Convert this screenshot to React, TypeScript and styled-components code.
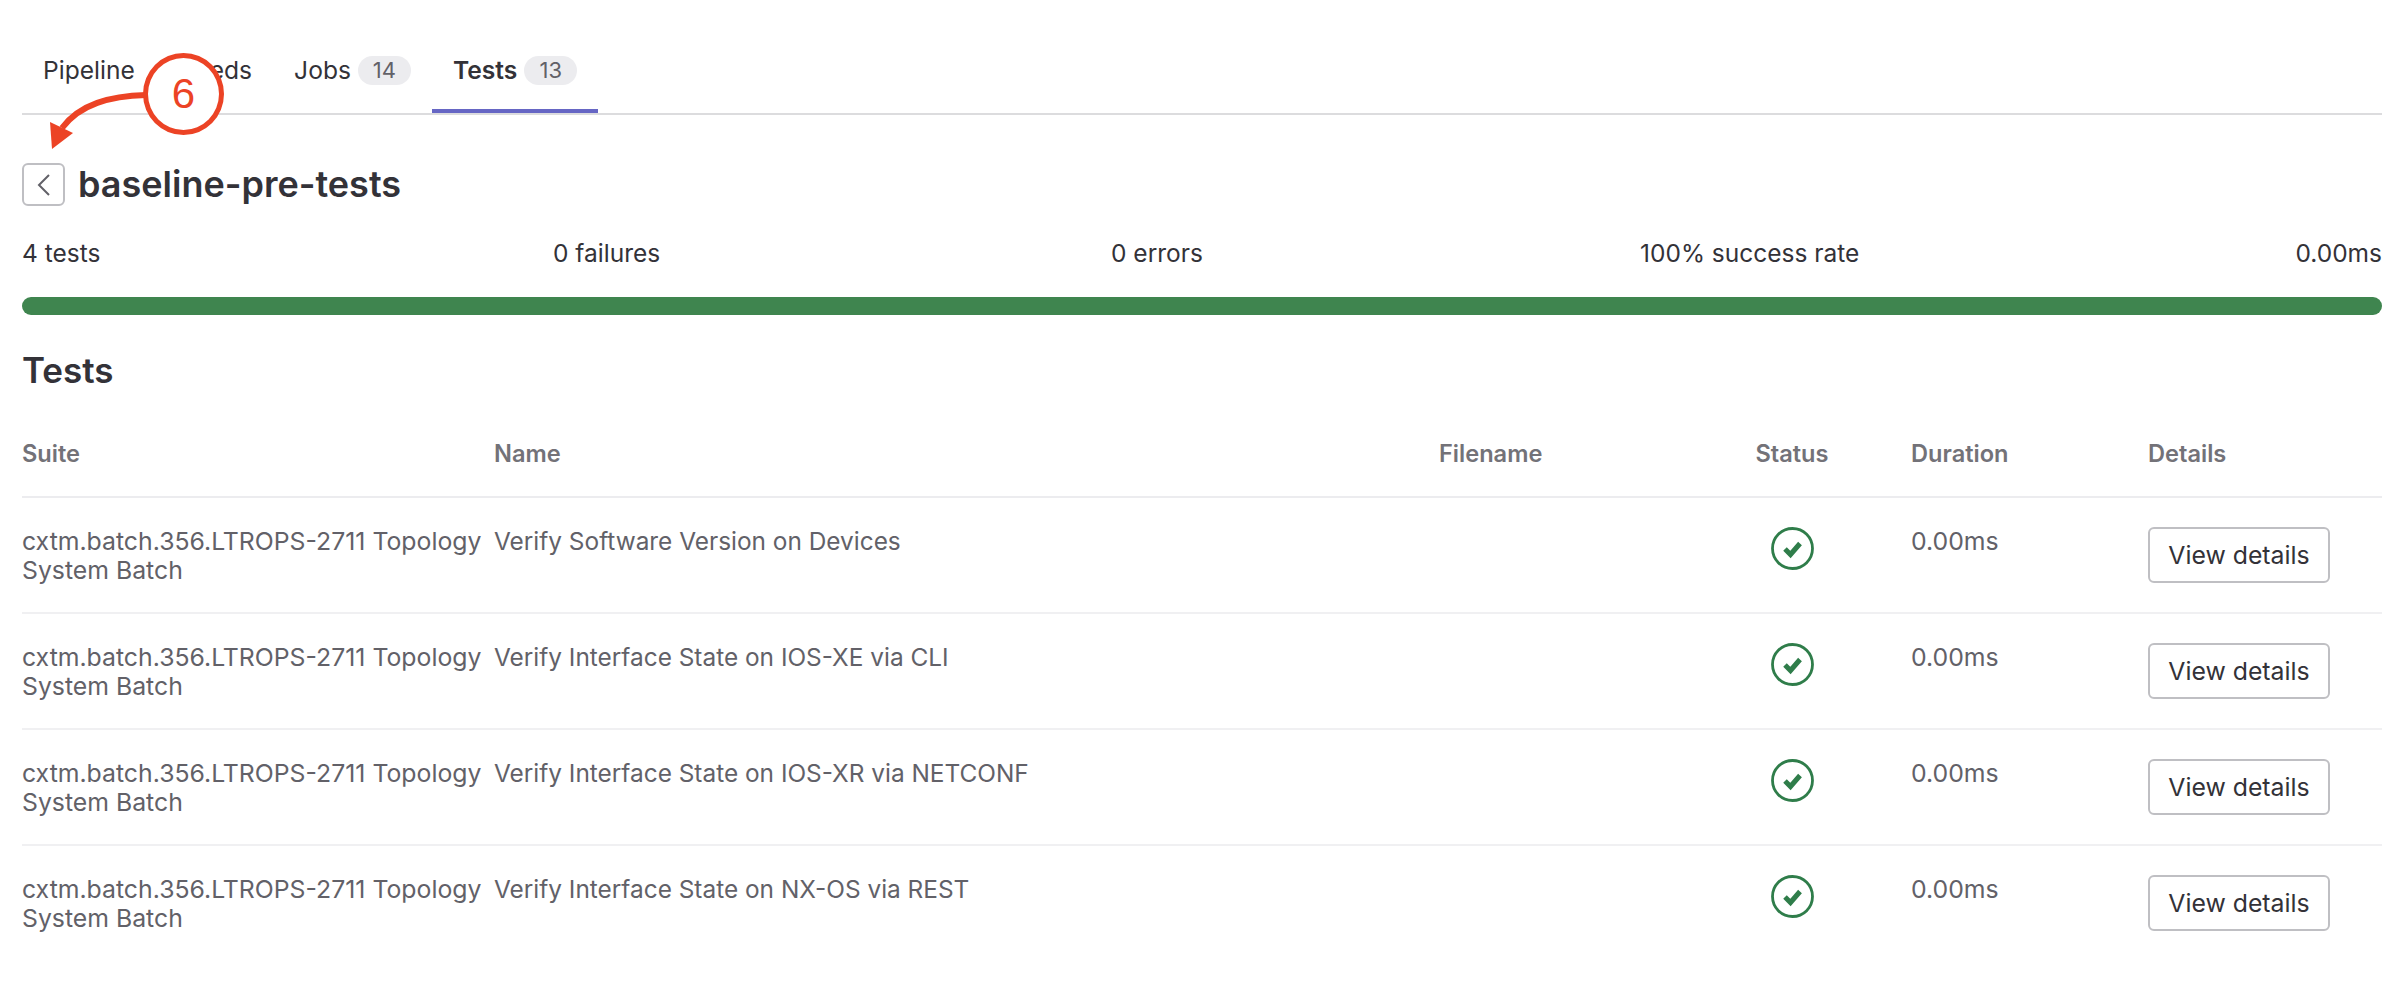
import React from "react";
import styled, { createGlobalStyle } from "styled-components";

const GlobalStyle = createGlobalStyle`
  html, body {
    margin: 0;
    background: #fff;
    font-family: Inter, "Noto Sans", "Liberation Sans", sans-serif;
    color: #333238;
  }
`;

const Page = styled.div`
  position: relative;
  width: 2396px;
  height: 990px;
  box-sizing: border-box;
  padding: 0 14px 0 22px;
  overflow: hidden;
`;

const Tabs = styled.div`
  display: flex;
  height: 87px;
  padding-top: 26px;
  border-bottom: 2px solid #dcdcde;
`;

const Tab = styled.div<{ $active?: boolean }>`
  display: flex;
  align-items: flex-start;
  gap: 7px;
  height: 87px;
  padding: 30px 21px 0;
  box-sizing: border-box;
  font-size: 24.6px;
  line-height: 29px;
  font-weight: ${(p) => (p.$active ? 600 : 400)};
  border-bottom: ${(p) => (p.$active ? "4px solid #6666c4" : "none")};
`;

const Badge = styled.span`
  display: inline-flex;
  align-items: center;
  justify-content: center;
  width: 53px;
  height: 29px;
  border-radius: 15px;
  background: #ececef;
  color: #626168;
  font-size: 22px;
  font-weight: 400;
`;

const TitleRow = styled.div`
  display: flex;
  align-items: center;
  gap: 13px;
  margin-top: 48px;
  height: 43px;
`;

const BackButton = styled.button`
  display: flex;
  align-items: center;
  justify-content: center;
  width: 43px;
  height: 43px;
  padding: 0;
  background: #fff;
  border: 2px solid #bfbfc3;
  border-radius: 6px;
  color: #626168;
`;

const Title = styled.h3`
  margin: 0;
  font-size: 36px;
  font-weight: 600;
  line-height: 43px;
`;

const Stats = styled.div`
  display: grid;
  grid-template-columns: 531px 558px 529px 1fr auto;
  margin-top: 33px;
  font-size: 24.5px;
  line-height: 29px;
`;

const Bar = styled.div`
  margin-top: 29px;
  height: 18px;
  border-radius: 9px;
  background: #3f854f;
`;

const SectionTitle = styled.h4`
  margin: 35px 0 0;
  font-size: 35px;
  font-weight: 600;
  line-height: 41px;
`;

const Row = styled.div<{ $head?: boolean; $last?: boolean }>`
  display: grid;
  grid-template-columns: 472px 945px 234px 238px 237px 1fr;
  box-sizing: border-box;
  height: ${(p) => (p.$head ? "107px" : "116px")};
  border-bottom: 2px solid
    ${(p) => (p.$last ? "transparent" : p.$head ? "#ececef" : "#f0f0f2")};
  padding-top: ${(p) => (p.$head ? "48px" : "29px")};
`;

const HeadCell = styled.div<{ $center?: boolean }>`
  font-size: 23.6px;
  line-height: 29px;
  font-weight: 600;
  color: #737278;
  text-align: ${(p) => (p.$center ? "center" : "left")};
`;

const Cell = styled.div<{ $center?: boolean }>`
  font-size: 24.8px;
  line-height: 29px;
  color: #626168;
  display: ${(p) => (p.$center ? "flex" : "block")};
  justify-content: center;
  align-items: flex-start;
`;

const NameCell = styled(Cell)`
  font-size: 24.4px;
`;

const ViewButton = styled.button`
  width: 182px;
  height: 56px;
  background: #fff;
  border: 2px solid #bfbfc3;
  border-radius: 6px;
  color: #333238;
  font: 400 24.8px Inter, "Noto Sans", sans-serif;
  padding: 0;
`;

const Annotation = styled.div`
  position: absolute;
  left: 40px;
  top: 50px;
  width: 190px;
  height: 104px;
`;

const Callout = styled.div`
  position: absolute;
  left: 103px;
  top: 3px;
  width: 81px;
  height: 82px;
  box-sizing: border-box;
  border: 5px solid #ec4325;
  border-radius: 50%;
  background: #fff;
  color: #ec4325;
  font: 400 42px "Liberation Sans", Arial, sans-serif;
  display: flex;
  align-items: center;
  justify-content: center;
`;

const Arrow = styled.svg`
  position: absolute;
  left: 0;
  top: 0;
`;

const SuccessIcon = () => (
  <svg width="43" height="43" viewBox="0 0 43 43" fill="none">
    <circle cx="21.5" cy="21.5" r="20" stroke="#2f7d4a" strokeWidth="2.8" />
    <path d="M14 22 L19.5 27.5 L29 16.5" stroke="#2f7d4a" strokeWidth="5" strokeLinejoin="miter" />
  </svg>
);

const tests = [
  "Verify Software Version on Devices",
  "Verify Interface State on IOS-XE via CLI",
  "Verify Interface State on IOS-XR via NETCONF",
  "Verify Interface State on NX-OS via REST",
];

export default function App() {
  return (
    <Page>
      <GlobalStyle />
      <Tabs>
        <Tab>Pipeline</Tab>
        <Tab>Needs</Tab>
        <Tab>
          Jobs <Badge>14</Badge>
        </Tab>
        <Tab $active>
          Tests <Badge>13</Badge>
        </Tab>
      </Tabs>
      <TitleRow>
        <BackButton>
          <svg width="14" height="24" viewBox="0 0 14 24" fill="none">
            <path d="M12 2 L2 12 L12 22" stroke="#626168" strokeWidth="2" />
          </svg>
        </BackButton>
        <Title>baseline-pre-tests</Title>
      </TitleRow>
      <Stats>
        <span>4 tests</span>
        <span>0 failures</span>
        <span>0 errors</span>
        <span>100% success rate</span>
        <span>0.00ms</span>
      </Stats>
      <Bar />
      <SectionTitle>Tests</SectionTitle>
      <Row $head>
        <HeadCell>Suite</HeadCell>
        <HeadCell>Name</HeadCell>
        <HeadCell>Filename</HeadCell>
        <HeadCell $center>Status</HeadCell>
        <HeadCell>Duration</HeadCell>
        <HeadCell>Details</HeadCell>
      </Row>
      {tests.map((name, i) => (
        <Row key={name} $last={i === tests.length - 1}>
          <Cell>
            cxtm.batch.356.LTROPS-2711 Topology
            <br />
            System Batch
          </Cell>
          <NameCell>{name}</NameCell>
          <Cell />
          <Cell $center>
            <SuccessIcon />
          </Cell>
          <Cell>0.00ms</Cell>
          <Cell>
            <ViewButton>View details</ViewButton>
          </Cell>
        </Row>
      ))}
      <Annotation>
        <Arrow width="190" height="104" viewBox="0 0 190 104" fill="none">
          <path d="M106 45 C70 46 40 54 22 78" stroke="#ec4325" strokeWidth="6" />
          <path d="M10 72 L33 83 L12 99 Z" fill="#ec4325" />
        </Arrow>
        <Callout>6</Callout>
      </Annotation>
    </Page>
  );
}
